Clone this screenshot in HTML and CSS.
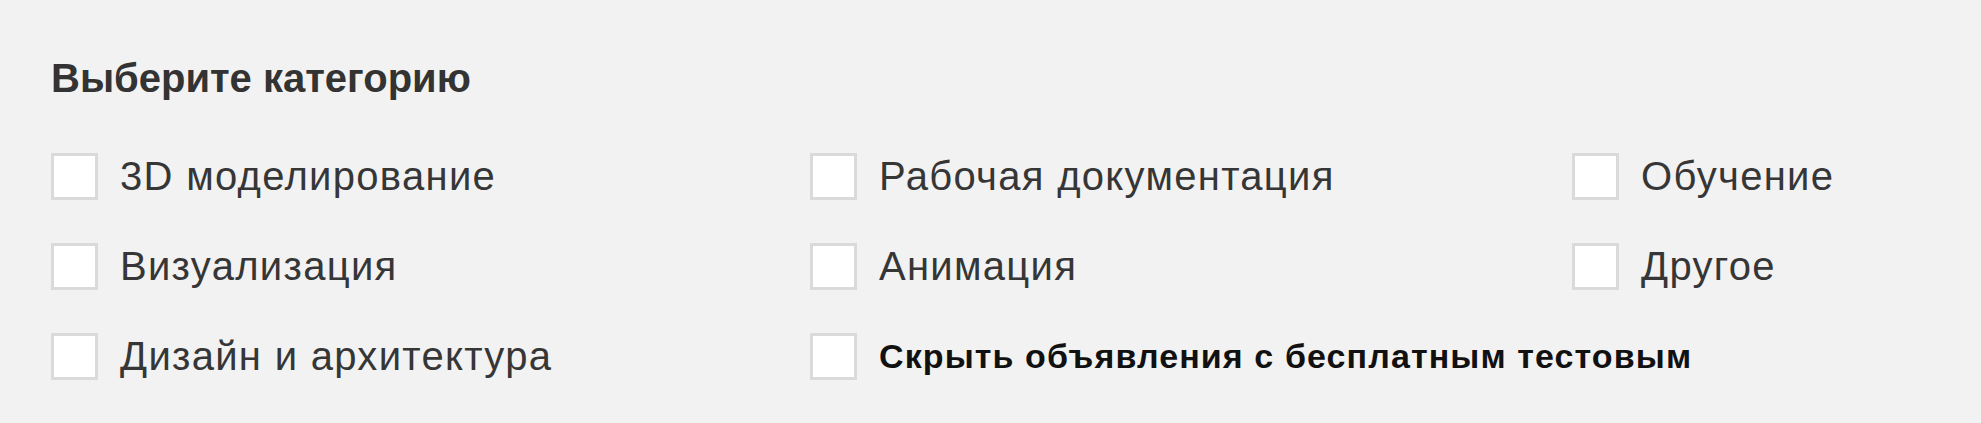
FILE: index.html
```html
<!DOCTYPE html>
<html lang="ru">
<head>
<meta charset="utf-8">
<title>Выберите категорию</title>
<link rel="stylesheet" href="styles.css">
</head>
<body>
<section class="filter">
  <h2 class="filter-title">Выберите категорию</h2>
  <div class="filter-grid">
    <label class="opt"><span class="box"></span><span class="opt-text">3D моделирование</span></label>
    <label class="opt"><span class="box"></span><span class="opt-text">Рабочая документация</span></label>
    <label class="opt"><span class="box"></span><span class="opt-text">Обучение</span></label>
    <label class="opt"><span class="box"></span><span class="opt-text">Визуализация</span></label>
    <label class="opt"><span class="box"></span><span class="opt-text">Анимация</span></label>
    <label class="opt"><span class="box"></span><span class="opt-text">Другое</span></label>
    <label class="opt"><span class="box"></span><span class="opt-text">Дизайн и архитектура</span></label>
    <label class="opt opt-wide"><span class="box"></span><span class="opt-text opt-strong">Скрыть объявления с бесплатным тестовым</span></label>
  </div>
</section>
</body>
</html>
```
FILE: styles.css
```css
html, body {
  margin: 0;
  padding: 0;
  background: #f2f2f2;
}
body {
  font-family: "Liberation Sans", Arial, sans-serif;
  color: #363636;
}
.filter {
  padding: 54px 0 0 51px;
}
.filter-title {
  margin: 0 0 51px 0;
  font-size: 40px;
  line-height: 48px;
  font-weight: bold;
  color: #333333;
}
.filter-grid {
  display: grid;
  grid-template-columns: 759px 762px 1fr;
  grid-auto-rows: 47px;
  row-gap: 43px;
}
.opt {
  display: flex;
  align-items: center;
  gap: 22px;
}
.opt-wide {
  grid-column: span 2;
}
.box {
  flex: none;
  width: 47px;
  height: 47px;
  box-sizing: border-box;
  border: 3px solid #dadada;
  background: #ffffff;
}
.opt-text {
  font-size: 40px;
  line-height: 47px;
  letter-spacing: 1.3px;
  white-space: nowrap;
}
.opt-strong {
  font-size: 34px;
  font-weight: bold;
  letter-spacing: 1.1px;
  color: #111111;
}
```
